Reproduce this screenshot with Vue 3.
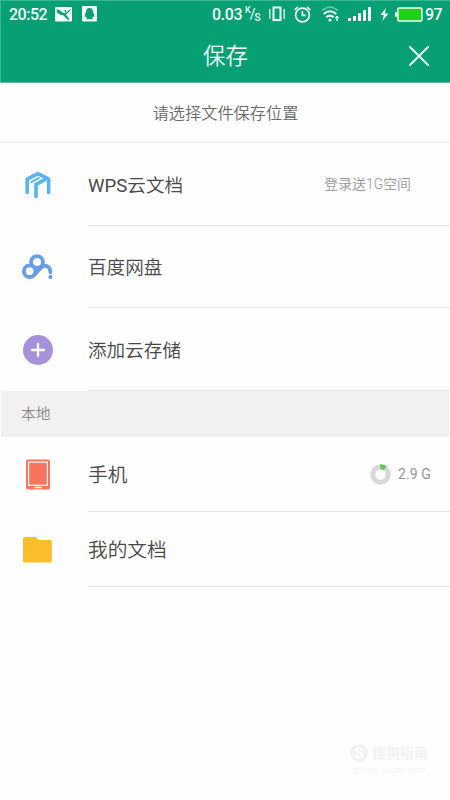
<script setup>
const signal = [3, 5, 8, 11, 14]
</script>

<template>
  <main class="screen">
    <header class="top">
      <div class="status">
        <span class="clock">20:52</span>
        <svg class="photo" width="17" height="15" viewBox="0 0 17 15">
          <rect width="17" height="14.5" rx="1.2" fill="#f1fffa" />
          <path d="M1.8 2.6C4 2 6 4.4 8 5.8L10 6.2 15.2 2.2V3.8L10.8 7.6 14.8 12.5H12.4L8.6 8.4C5.5 8.2 3 6.5 1.8 5Z" fill="#079f74" />
          <circle cx="10.4" cy="4" r="1" fill="#079f74" />
        </svg>
        <svg class="qq" width="15" height="16" viewBox="0 0 15 16">
          <rect width="15" height="15.5" rx="1.2" fill="#f1fffa" />
          <path d="M7.5 2C4.8 2 4 4 4 6.3C3 8 2.3 9.5 2.8 11L4 10.4C4.2 11.3 4.6 11.7 5 12.1L3.7 13.2H7L7.5 12.7 8 13.2H11.3L10 12.1C10.5 11.7 10.8 11.2 11 10.4L12.2 11C12.7 9.5 12 8 11 6.3C11 4 10.2 2 7.5 2Z" fill="#079f74" />
        </svg>
        <div class="indicators">
          <span class="speed">0.03</span>
          <span class="unit"><i>K</i><b>/</b><em>S</em></span>
          <svg class="vibrate" width="16" height="16" viewBox="0 0 16 16" fill="none" stroke="#effff9">
            <rect x="4.5" y="1.5" width="7" height="12.6" stroke-width="2" />
            <path d="M.8 3V12.7M15.2 3V12.7" stroke-width="1.3" />
          </svg>
          <svg class="alarm" width="17" height="17" viewBox="0 0 17 17" fill="none" stroke="#effff9">
            <circle cx="8.5" cy="9" r="6.9" stroke-width="1.7" />
            <path d="M8.4 5V9.4H11.7M.6 4L4 .8M16.4 4L13 .8" stroke-width="1.6" />
          </svg>
          <svg class="wifi" width="19" height="17" viewBox="0 0 19 17" fill="none" stroke="#effff9" stroke-width="2">
            <path d="M1 4.7Q9-2.5 17 4.7" stroke="#65c6a8" stroke-width="1.6" />
            <path d="M2.7 8Q9 2.5 15.3 8M5.4 11.2Q9 8 12.6 11.2" />
            <circle cx="9" cy="14" r="1.6" fill="#effff9" stroke="none" />
            <path d="M16 15V11" stroke-width="1.4" /><path d="M13.6 12.3L16 9.4 18.4 12.3Z" fill="#effff9" stroke="none" />
          </svg>
          <div class="signal"><i v-for="h in signal" :key="h" :style="{ height: h + 'px' }" /></div>
          <svg class="bolt" width="9" height="13" viewBox="0 0 9 13"><path d="M5.8 0L.5 7H3.8L2.5 13 8.5 5.4H5Z" fill="#effff9" /></svg>
          <svg class="battery" width="28" height="15" viewBox="0 0 28 15">
            <rect x="2.8" y="1" width="24" height="13" rx="1.2" fill="#20cf17" stroke="#effff9" stroke-width="1.6" />
            <path d="M0 5.2H2V9.8H0Z" fill="#effff9" />
          </svg>
          <span class="percent">97</span>
        </div>
      </div>
      <div class="title">
        <h1>保存</h1>
        <svg class="close" width="20" height="20" viewBox="0 0 20 20"><path d="M1 1L19 19M19 1L1 19" stroke="#f4fffb" stroke-width="1.8" stroke-linecap="round" /></svg>
      </div>
    </header>
    <p class="hint">请选择文件保存位置</p>
    <section class="cloud">
      <div class="row">
        <div class="icon">
          <svg width="26" height="28" viewBox="0 0 26 28" fill="none" stroke="#58b4ee" stroke-width="3.6" stroke-linecap="round" stroke-linejoin="round">
            <path d="M2.2 21.5V8.2L13 2.6 23.6 8.2V21.5" />
            <path d="M6.4 11.2L13.8 6.8" stroke-width="2" />
            <path d="M11 25.4V13.4L19.8 8.6" />
          </svg>
        </div>
        <div class="body"><span class="label"><span class="latin">WPS</span>云文档</span><span class="note">登录送1G空间</span></div>
      </div>
      <div class="row second">
        <div class="icon">
          <svg width="31" height="26" viewBox="0 0 31 26" fill="none" stroke="#679ee9" stroke-width="3.8">
            <circle cx="7.7" cy="17.2" r="5.8" /><circle cx="15" cy="8.1" r="5.9" />
            <path d="M11.6 21.6L19.2 13.5C23.5 9.8 28.4 12.6 28.4 18.2" stroke-linecap="round" />
            <circle cx="28.4" cy="23" r="2" fill="#5998ed" stroke="none" />
          </svg>
        </div>
        <div class="body"><span class="label">百度网盘</span></div>
      </div>
      <div class="row third">
        <div class="icon">
          <svg width="30" height="30" viewBox="0 0 30 30"><circle cx="15" cy="15" r="15" fill="#a493dc" /><path d="M15 9V21M9 15H21" stroke="#fff" stroke-width="2.3" stroke-linecap="round" /></svg>
        </div>
        <div class="body"><span class="label">添加云存储</span></div>
      </div>
    </section>
    <h2>本地</h2>
    <section class="local">
      <div class="row">
        <div class="icon">
          <svg width="24" height="31" viewBox="0 0 24 31"><rect y=".5" width="24" height="30" rx="1.8" fill="#f7745f" /><rect x="2.6" y="3.1" width="18.8" height="23.2" fill="none" stroke="#fff" stroke-width="1.2" /><path d="M9 28.5H15" stroke="#fff" stroke-width="1.6" stroke-linecap="round" /></svg>
        </div>
        <div class="body">
          <span class="label">手机</span>
          <span class="storage">
            <svg width="21" height="21" viewBox="0 0 21 21" fill="none" stroke-width="5"><circle cx="10.5" cy="10.5" r="7.7" stroke="#d9d9d9" /><path d="M10.2 2.8A7.7 7.7 0 0 1 15.1 4.3" stroke="#65c25c" /></svg>
            2.9 G
          </span>
        </div>
      </div>
      <div class="row">
        <div class="icon">
          <svg width="29" height="26" viewBox="0 0 29 26"><path d="M1.5 0H12.5Q13.5 0 14 1L15.5 3H27.2Q28.8 3 28.8 4.5V24Q28.8 25.6 27.2 25.6H1.6Q0 25.6 0 24V1.5Q0 0 1.5 0Z" fill="#fbbd2c" /></svg>
        </div>
        <div class="body"><span class="label">我的文档</span></div>
      </div>
    </section>
    <footer class="watermark">
      <div class="brand"><b>S</b><span>搜狗指南</span></div>
      <small>zhinan.sogou.com</small>
    </footer>
  </main>
</template>

<style>
body { margin: 0; }
</style>

<style scoped>
* { box-sizing: border-box; }
.screen { width: 450px; height: 800px; display: flex; flex-direction: column; background: #fefefe; color: #484848; font-family: Roboto, "Noto Sans CJK SC", sans-serif; font-weight: 350; overflow: hidden; }
svg { display: block; flex: none; }
.top { height: 83px; flex: none; background: #079f74; border-top: 1px solid #39b58f; border-left: 1px solid #40b592; border-bottom: 1px solid #5dbd9f; }
.status { height: 26px; display: flex; align-items: center; padding: 0 8px 0 8px; color: #effff9; font-weight: 500; font-size: 16px; white-space: nowrap; }
.clock { width: 38px; letter-spacing: -.5px; }
.photo { margin-left: 8px; }
.qq { margin-left: 10px; }
.indicators { margin-left: auto; display: flex; align-items: center; }
.speed { width: 31px; font-size: 16px; letter-spacing: -.4px; }
.unit { display: flex; width: 16px; height: 18px; margin-left: 2px; font-size: 9px; line-height: 9px; }
.unit i, .unit em { font-style: normal; }
.unit i { padding-top: 1px; }
.unit b { font-weight: 400; font-size: 14px; line-height: 18px; margin: 0 -1px; }
.unit em { padding-top: 8px; font-size: 10px; }
.vibrate { margin-left: 8px; }
.alarm { margin-left: 9px; }
.wifi { margin-left: 10px; }
.signal { display: flex; align-items: flex-end; gap: 2px; margin-left: 8px; height: 14px; }
.signal i { width: 3px; background: #effff9; }
.bolt { margin-left: 9px; }
.battery { margin-left: 6px; }
.percent { margin-left: 2px; width: 17px; font-size: 16px; letter-spacing: -.6px; }
.title { height: 55px; display: grid; grid-template-columns: 1fr auto 1fr; align-items: center; padding: 2px 21px 0 20px; color: #f1fffa; }
h1 { grid-column: 2; margin: 0; padding-left: 1px; font-size: 22.4px; line-height: 30px; font-weight: 350; }
.close { justify-self: end; }
.hint { flex: none; height: 60px; margin: 0; padding: 1px 0 0 1px; border-bottom: 2px solid #f1f1f1; text-align: center; font-size: 16.2px; line-height: 60px; color: #696969; }
.row { height: 83px; display: flex; }
.cloud, .local { flex: none; }
.second { height: 82px; }
.third { height: 83px; }
.icon { width: 75px; display: grid; place-items: center; flex: none; }
.body { flex: 1; margin-left: 13px; padding-bottom: 2px; display: flex; align-items: center; justify-content: space-between; border-bottom: 1px solid #e8e8e8; }
.label { font-size: 18.6px; }
.latin { font-weight: 400; }
.note { margin-right: 39px; font-size: 13.9px; color: #969696; }
h2 { flex: none; height: 46px; margin: 0 1px; padding-left: 20px; background: #f1f1f1; font-size: 14.8px; line-height: 46px; font-weight: 350; color: #888; }
.local .row { height: 75px; }
.local .label { font-size: 19.7px; }
.storage { display: flex; align-items: center; gap: 7px; padding-top: 2px; margin-right: 19px; color: #969696; font-size: 14px; font-weight: 400; letter-spacing: .1px; }
.watermark { margin: auto 22px 22px auto; width: 78px; color: #f3f3f3; text-align: center; }
.brand { display: flex; align-items: center; justify-content: space-between; line-height: 20px; font-size: 14px; font-weight: 700; }
.brand b { width: 18px; height: 18px; line-height: 18px; border-radius: 50%; background: #f3f3f3; color: #fff; }
.watermark small { display: block; font-size: 9px; line-height: 15px; }
</style>
